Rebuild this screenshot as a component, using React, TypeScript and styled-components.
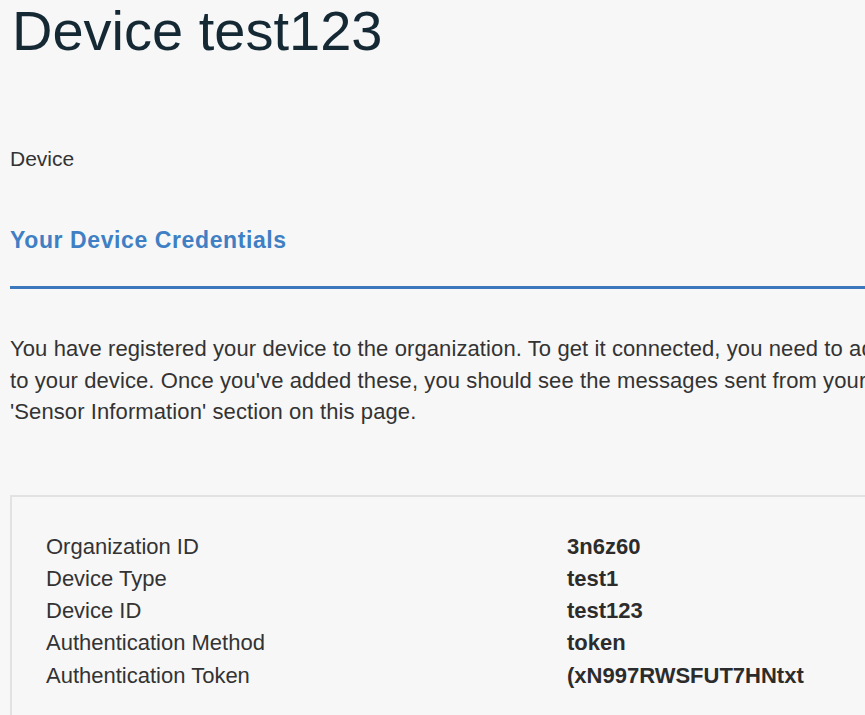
import React from 'react';
import styled, { createGlobalStyle } from 'styled-components';

const GlobalStyle = createGlobalStyle`
  html, body {
    margin: 0;
    padding: 0;
    background: #f7f7f7;
    overflow: hidden;
  }
  body {
    font-family: "Liberation Sans", Arial, sans-serif;
    -webkit-font-smoothing: antialiased;
  }
`;

// Layout
const Page = styled.main`
  display: flex;
  flex-direction: column;
  padding-left: 10px;
  width: 1200px;
`;

const Title = styled.h1`
  margin: 0 0 0 2px;
  font-size: 56px;
  line-height: 62px;
  font-weight: 400;
  color: #152935;
`;

const Breadcrumb = styled.div`
  margin-top: 85px;
  font-size: 21px;
  line-height: 24px;
  color: #333;
`;

const SectionTitle = styled.h2`
  margin: 55px 0 0;
  font-size: 23px;
  line-height: 28px;
  font-weight: 700;
  letter-spacing: 0.6px;
  color: #3f7fc4;
`;

const SectionRule = styled.hr`
  margin: 32px 0 0;
  border: none;
  height: 3px;
  background: #3d78bf;
`;

const Intro = styled.p`
  margin: 44px 0 0;
  font-size: 22px;
  line-height: 31.5px;
  letter-spacing: 0.1px;
  color: #333;
  white-space: nowrap;
`;

const Card = styled.section`
  margin-top: 67px;
  border: 2px solid #e2e2e2;
  padding: 34px 34px 40px;
  display: grid;
  grid-template-columns: 521px 1fr;
`;

const Label = styled.div`
  font-size: 22px;
  line-height: 32.3px;
  color: #333;
`;

const Value = styled.div`
  font-size: 22px;
  line-height: 32.3px;
  font-weight: 700;
  color: #2c2c2c;
`;

interface Credential {
  label: string;
  value: string;
}

const credentials: Credential[] = [
  { label: 'Organization ID', value: '3n6z60' },
  { label: 'Device Type', value: 'test1' },
  { label: 'Device ID', value: 'test123' },
  { label: 'Authentication Method', value: 'token' },
  { label: 'Authentication Token', value: '(xN997RWSFUT7HNtxt' },
];

export default function App() {
  return (
    <>
      <GlobalStyle />
      <Page>
        <Title>Device test123</Title>
        <Breadcrumb>Device</Breadcrumb>
        <SectionTitle>Your Device Credentials</SectionTitle>
        <SectionRule />
        <Intro>
          You have registered your device to the organization. To get it connected, you need to add these credentials
          <br />
          to your device. Once you've added these, you should see the messages sent from your device in the
          <br />
          'Sensor Information' section on this page.
        </Intro>
        <Card>
          {credentials.map(c => (
            <React.Fragment key={c.label}>
              <Label>{c.label}</Label>
              <Value>{c.value}</Value>
            </React.Fragment>
          ))}
        </Card>
      </Page>
    </>
  );
}
